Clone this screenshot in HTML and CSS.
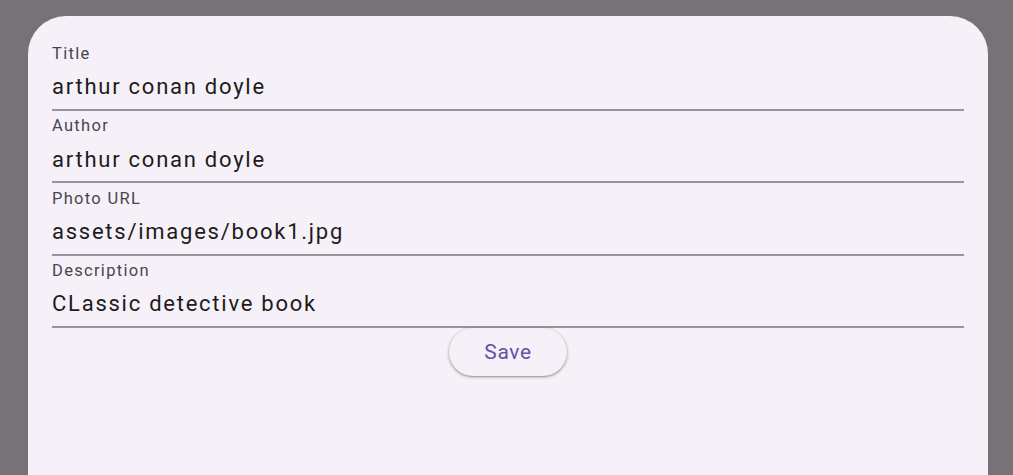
FILE: index.html
```html
<!DOCTYPE html>
<html lang="en">
<head>
<meta charset="utf-8">
<title>Edit book</title>
<link rel="stylesheet" href="styles.css">
</head>
<body>
<div class="screen">
  <div class="sheet">
    <form class="form">
      <label class="field">
        <span class="field-label">Title</span>
        <span class="field-value">arthur conan doyle</span>
      </label>
      <label class="field">
        <span class="field-label">Author</span>
        <span class="field-value">arthur conan doyle</span>
      </label>
      <label class="field">
        <span class="field-label">Photo URL</span>
        <span class="field-value">assets/images/book1.jpg</span>
      </label>
      <label class="field">
        <span class="field-label">Description</span>
        <span class="field-value">CLassic detective book</span>
      </label>
      <div class="actions">
        <button type="button" class="save-btn">Save</button>
      </div>
    </form>
  </div>
</div>
</body>
</html>
```

FILE: styles.css
```css
* { box-sizing: border-box; }
html, body {
  margin: 0;
  height: 100%;
  overflow: hidden;
}
body {
  background: #767276;
  font-family: Roboto, "Noto Sans", sans-serif;
}
.screen {
  height: 100%;
  padding: 16px 25px 0 28px;
}
.sheet {
  width: 960px;
  height: 100%;
  background: #f6f1f8;
  border-radius: 38px 38px 0 0;
  padding: 22.7px 24px 0 24px;
}
.form {
  display: flex;
  flex-direction: column;
}
.field {
  display: flex;
  flex-direction: column;
  height: 72.3px;
  border-bottom: 2px solid #99949c;
}
.field-label {
  font-size: 16.5px;
  line-height: 20px;
  margin-top: 5.4px;
  color: #49454f;
  letter-spacing: 1.3px;
}
.field-value {
  font-size: 22px;
  line-height: 26px;
  margin-top: 10.3px;
  color: #1d1b20;
  letter-spacing: 1.75px;
}
.actions {
  display: flex;
  justify-content: center;
}
.save-btn {
  height: 48px;
  width: 118px;
  padding: 0;
  border: none;
  border-radius: 24px;
  background: #f6f1f8;
  color: #6750a4;
  font-family: Roboto, "Noto Sans", sans-serif;
  font-size: 21px;
  font-weight: 400;
  letter-spacing: 0.6px;
  box-shadow: 0 1px 2px rgba(0,0,0,0.3), 0 1px 3px 1px rgba(0,0,0,0.12);
}
```
